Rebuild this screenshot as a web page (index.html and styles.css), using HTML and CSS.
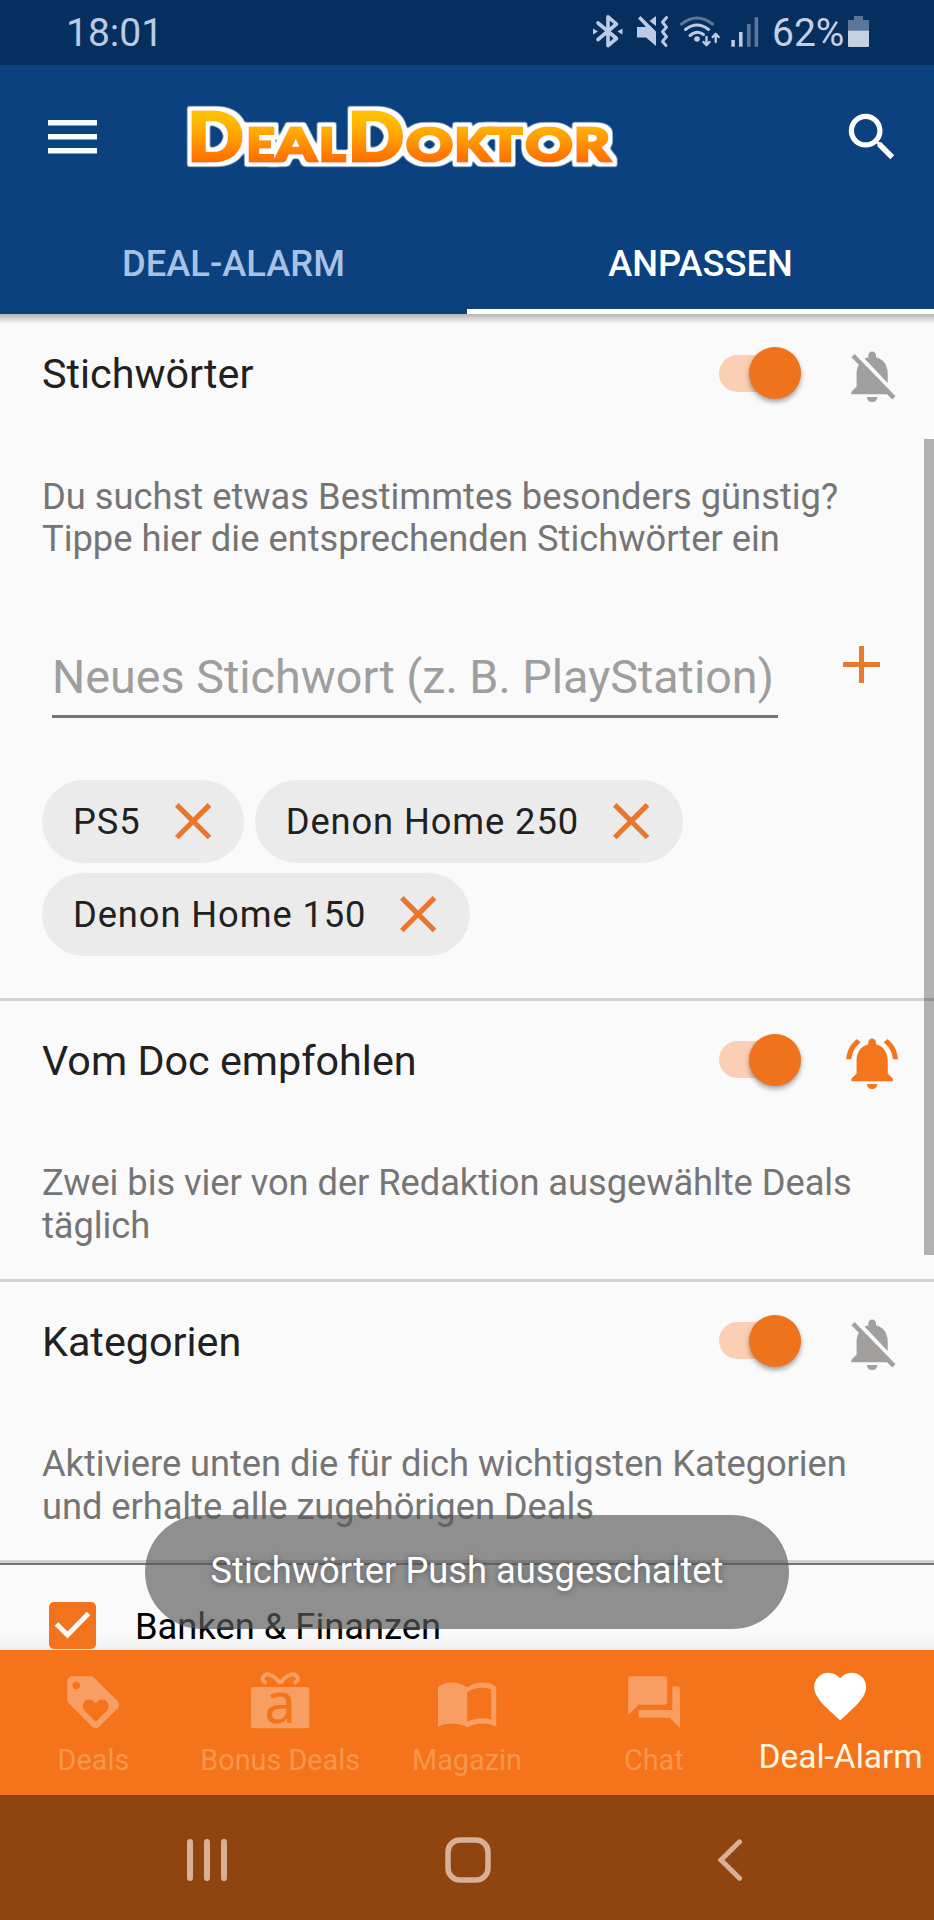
FILE: index.html
```html
<!DOCTYPE html>
<html lang="de">
<head>
<meta charset="utf-8">
<title>DealDoktor – Deal-Alarm anpassen</title>
<link rel="stylesheet" href="styles.css">
</head>
<body>
<svg width="0" height="0" class="defs">
  <symbol id="bell-off" viewBox="0 0 24 24"><path d="M20 18.69L7.84 6.14 5.27 3.49 4 4.76l2.8 2.8v.01c-.52.99-.8 2.16-.8 3.42v5l-2 2v1h13.73l2 2L21 19.72l-1-1.03zM12 22c1.11 0 2-.89 2-2h-4c0 1.11.89 2 2 2zm6-7.32V11c0-3.08-1.64-5.64-4.5-6.32V4c0-.83-.67-1.5-1.5-1.5s-1.5.67-1.5 1.5v.68c-.15.03-.29.08-.42.12-.1.03-.2.07-.3.11h-.01c-.01 0-.01 0-.02.01-.23.09-.46.2-.68.31 0 0-.01 0-.01.01L18 14.68z"/></symbol>
  <symbol id="bell-on" viewBox="0 0 24 24"><path d="M7.58 4.08L6.15 2.65C3.75 4.48 2.17 7.3 2.03 10.5h2c.15-2.65 1.51-4.97 3.55-6.42zm12.39 6.42h2c-.15-3.2-1.73-6.02-4.12-7.85l-1.42 1.43c2.02 1.45 3.39 3.77 3.54 6.42zM18 11c0-3.07-1.64-5.64-4.5-6.32V4c0-.83-.67-1.5-1.5-1.5s-1.5.67-1.5 1.5v.68C7.63 5.36 6 7.92 6 11v5l-2 2v1h16v-1l-2-2v-5zm-6 11c.14 0 .27-.01.4-.04.65-.14 1.18-.58 1.44-1.18.1-.24.15-.5.15-.78h-4c.01 1.1.9 2 2.01 2z"/></symbol>
  <symbol id="close" viewBox="0 0 24 24"><path d="M19 6.41L17.59 5 12 10.59 6.41 5 5 6.41 10.59 12 5 17.59 6.41 19 12 13.41 17.59 19 19 17.59 13.41 12z"/></symbol>
</svg>

<div class="screen">
  <div class="status-bar">
    <span class="clock">18:01</span>
    <svg class="status-icons" viewBox="592 10 170 42">
      <g fill="none" stroke="#bccbe3" stroke-width="3.6" stroke-linejoin="round" stroke-linecap="round">
        <path d="M598 23L616.5 38.5 608 45.5V16.8L616.5 24 598 39.5"/>
        <path d="M666.5 17.5l-4 4.7 4 4.9-4 4.7 4 4.9-4 4.7 3.5 4" stroke-width="3"/>
        <path d="M685.5 29.5Q697 20.5 708.5 29.5" stroke-width="3"/>
        <path d="M690 35.5Q697 29.5 703.5 34.5" stroke-width="3"/>
        <path d="M681.5 24Q697 12 712.5 24" stroke="#5c7699" stroke-width="3"/>
        <path d="M706.5 37v8m-3-3l3 3.2 3-3.2M715.7 42v-8m-3 3l3-3.2 3 3.2" stroke-width="2.4"/>
      </g>
      <g fill="#bccbe3">
        <path d="M593 28.5l5 3-5 3zM622.500 28.500l-5 3 5 3z"/>
        <path d="M637 27h9l-8-8.500 2.500-2.500L656 31.500V46l-10-8.500h-9zM656 16v10l-6.500-5z"/>
        <circle cx="697" cy="39" r="2.800"/>
        <rect x="731.300" y="40" width="3.600" height="6.700"/>
        <rect x="739" y="32" width="3.600" height="14.700"/>
      </g>
      <path d="M747 24h3.600v22.700H747zM754.600 17.300h3.600v29.400h-3.600z" fill="#5c7699"/>
    </svg>
    <span class="percent">62%</span>
    <svg class="battery" viewBox="0 0 22 32"><path d="M6 0h9v4h6v10.500H0V4h6z" fill="#5c7699"/><path d="M0 14.500h21V30a1 1 0 0 1-1 1H1a1 1 0 0 1-1-1z" fill="#c5d0e4"/></svg>
  </div>

  <header class="app-bar">
    <svg class="menu" viewBox="0 0 49 34"><path d="M0 0h49v5.500H0zM0 14h49v5.500H0zM0 28h49v5.500H0z" fill="#f4fdff"/></svg>
    <svg class="logo" viewBox="180 100 444 76" role="img">
      <defs>
        <linearGradient id="sun" gradientUnits="userSpaceOnUse" x1="0" y1="110" x2="0" y2="163"><stop offset="0" stop-color="#ffc400"/><stop offset=".35" stop-color="#ffb000"/><stop offset="1" stop-color="#ff6a00"/></linearGradient>
        <filter id="rim" x="-5%" y="-20%" width="110%" height="140%">
          <feMorphology in="SourceAlpha" operator="dilate" radius="4"/>
          <feGaussianBlur stdDeviation="1"/>
          <feComponentTransfer result="edge"><feFuncR type="linear" slope="0" intercept="1"/><feFuncG type="linear" slope="0" intercept="1"/><feFuncB type="linear" slope="0" intercept="1"/><feFuncA type="linear" slope="1.800" intercept="-.3"/></feComponentTransfer>
          <feMerge><feMergeNode in="edge"/><feMergeNode in="SourceGraphic"/></feMerge>
        </filter>
      </defs>
      <text class="logo-text" y="160.500" filter="url(#rim)"><tspan class="big" x="187.500" textLength="56" lengthAdjust="spacingAndGlyphs">D</tspan><tspan x="246.500" textLength="28" lengthAdjust="spacingAndGlyphs">E</tspan><tspan x="275.500" textLength="40.500" lengthAdjust="spacingAndGlyphs">A</tspan><tspan x="319" textLength="26.500" lengthAdjust="spacingAndGlyphs">L</tspan><tspan class="big" x="348" textLength="56" lengthAdjust="spacingAndGlyphs">D</tspan><tspan x="406" textLength="47" lengthAdjust="spacingAndGlyphs">O</tspan><tspan x="454.500" textLength="36.500" lengthAdjust="spacingAndGlyphs">K</tspan><tspan x="488.500" textLength="33.500" lengthAdjust="spacingAndGlyphs">T</tspan><tspan x="525.500" textLength="47" lengthAdjust="spacingAndGlyphs">O</tspan><tspan x="574" textLength="36" lengthAdjust="spacingAndGlyphs">R</tspan></text>
    </svg>
    <svg class="search" viewBox="0 0 24 24"><path d="M15.500 14h-.79l-.28-.27C15.410 12.590 16 11.110 16 9.500 16 5.910 13.090 3 9.500 3S3 5.910 3 9.500 5.910 16 9.500 16c1.610 0 3.090-.59 4.230-1.570l.27.28v.79l5 4.990L20.490 19l-4.990-5zm-6 0C7.010 14 5 11.990 5 9.500S7.010 5 9.500 5 14 7.010 14 9.500 11.990 14 9.500 14z" fill="#fff"/></svg>
  </header>

  <nav class="tabs">
    <div class="tab">DEAL-ALARM</div>
    <div class="tab selected">ANPASSEN</div>
  </nav>

  <main class="content">
    <section class="section">
      <div class="section-head">
        <h2>Stichwörter</h2>
        <div class="switch"><div class="thumb"></div></div>
        <svg class="bell muted"><use href="#bell-off"/></svg>
      </div>
      <p class="desc">Du suchst etwas Bestimmtes besonders günstig?<br>Tippe hier die entsprechenden Stichwörter ein</p>
      <div class="entry">
        <div class="field"><span>Neues Stichwort (z. B. PlayStation)</span></div>
        <svg class="plus" viewBox="0 0 37 37"><path d="M16 0h5v16h16v5H21v16h-5V21H0v-5h16z" fill="#e57a30"/></svg>
      </div>
      <div class="chips">
        <div class="chip"><span>PS5</span><svg><use href="#close"/></svg></div>
        <div class="chip"><span>Denon Home 250</span><svg><use href="#close"/></svg></div>
        <div class="chip"><span>Denon Home 150</span><svg><use href="#close"/></svg></div>
      </div>
    </section>

    <section class="section">
      <div class="section-head">
        <h2>Vom Doc empfohlen</h2>
        <div class="switch"><div class="thumb"></div></div>
        <svg class="bell"><use href="#bell-on"/></svg>
      </div>
      <p class="desc tight">Zwei bis vier von der Redaktion ausgewählte Deals<br>täglich</p>
    </section>

    <section class="section">
      <div class="section-head">
        <h2>Kategorien</h2>
        <div class="switch"><div class="thumb"></div></div>
        <svg class="bell muted"><use href="#bell-off"/></svg>
      </div>
      <p class="desc tight">Aktiviere unten die für dich wichtigsten Kategorien<br>und erhalte alle zugehörigen Deals</p>
    </section>

    <div class="category">
      <svg class="checkbox" viewBox="0 0 47 47"><rect width="47" height="47" rx="5" fill="#f2731d"/><path d="M7.500 22L18.500 33 39.500 11.500" fill="none" stroke="#fff8ee" stroke-width="5"/></svg>
      <span>Banken &amp; Finanzen</span>
    </div>
    <div class="scrollbar"></div>
    <div class="toast">Stichwörter Push ausgeschaltet</div>
  </main>

  <nav class="bottom-nav">
    <div class="item">
      <svg class="icon" viewBox="0 0 24 24"><path d="M21.410 11.580l-9-9C12.050 2.220 11.550 2 11 2H4c-1.100 0-2 .9-2 2v7c0 .55.22 1.050.59 1.420l9 9c.36.36.86.58 1.410.58s1.050-.22 1.410-.59l7-7c.37-.36.59-.86.59-1.410s-.23-1.060-.59-1.420zM5.500 7C4.670 7 4 6.330 4 5.500S4.670 4 5.500 4 7 4.670 7 5.500 6.330 7 5.500 7zm11.770 8.270L13 19.540l-4.270-4.270C8.280 14.810 8 14.190 8 13.500c0-1.380 1.120-2.500 2.500-2.500.69 0 1.320.28 1.770.74l.73.72.73-.73c.45-.45 1.080-.73 1.770-.73 1.380 0 2.500 1.120 2.500 2.500 0 .69-.28 1.320-.73 1.770z"/></svg>
      <span>Deals</span>
    </div>
    <div class="item">
      <svg class="icon" viewBox="0 0 62 62">
        <rect x="2" y="16" width="58" height="41" rx="2"/>
        <path d="M31 12C27 6 19 1 15 4.500 12 8 14 11 17.500 12M31 12C35 6 43 1 47 4.500 50 8 48 11 44.500 12" fill="none" stroke="#f89e62" stroke-width="4"/>
        <text class="gift-letter" x="31" y="51.500" text-anchor="middle">a</text>
      </svg>
      <span>Bonus Deals</span>
    </div>
    <div class="item">
      <svg class="icon" viewBox="0 0 62 62"><path fill-rule="evenodd" d="M2 16C10 10 22 10 31 16.500 40 10 52 10 60 16V55.500C52 51 40 51 31 56 22 51 10 51 2 55.500zM31 21V50.500C38 47 48 46 55 48.500V18.500C47 15.500 38 16.500 31 21z"/></svg>
      <span>Magazin</span>
    </div>
    <div class="item">
      <svg class="icon" viewBox="0 0 24 24"><path d="M21 6h-2v9H6v2c0 .55.45 1 1 1h11l4 4V7c0-.55-.45-1-1-1zm-4 6V3c0-.55-.45-1-1-1H3c-.55 0-1 .45-1 1v14l4-4h10c.55 0 1-.45 1-1z"/></svg>
      <span>Chat</span>
    </div>
    <div class="item active">
      <svg class="icon" viewBox="0 0 24 24"><path d="M12 21.350l-1.450-1.320C5.400 15.360 2 12.280 2 8.500 2 5.420 4.420 3 7.500 3c1.740 0 3.410.81 4.500 2.090C13.090 3.810 14.760 3 16.500 3 19.580 3 22 5.420 22 8.500c0 3.780-3.400 6.860-8.550 11.540L12 21.350z"/></svg>
      <span>Deal-Alarm</span>
    </div>
  </nav>

  <div class="system-nav">
    <svg viewBox="0 0 40 42"><path d="M3 3v36M20 3v36M37 3v36" stroke-width="6"/></svg>
    <svg class="home" viewBox="0 0 46 46"><rect x="3" y="3" width="40" height="40" rx="12" stroke-width="5.500"/></svg>
    <svg class="back" viewBox="0 0 26 42"><path d="M22.500 2.800L4 21l18.500 18.200" stroke-width="5"/></svg>
  </div>
</div>
</body>
</html>
```
FILE: styles.css
```css
* { box-sizing: border-box; }

body {
  margin: 0;
  font-family: Roboto, "Noto Sans", sans-serif;
  background: #fafafa;
}

svg { display: block; flex: none; }
.defs { position: absolute; }

.screen {
  display: flex;
  flex-direction: column;
  width: 934px;
  height: 1920px;
  overflow: hidden;
}

/* Status bar */
.status-bar {
  display: flex;
  align-items: center;
  height: 65px;
  padding: 0 64px 0 66px;
  background: #052f5f;
  color: #bccbe3;
  font-size: 39px;
  line-height: 65px;
}
.clock { flex: 1; padding-top: 2px; }
.status-icons { width: 170px; height: 42px; margin-top: -3px; }
.percent { width: 86px; padding: 2px 0 0 10px; color: #c5d0e4; white-space: nowrap; }
.battery { width: 22px; height: 32px; margin-top: -2px; }

/* App bar */
.app-bar {
  display: flex;
  align-items: center;
  height: 145px;
  padding: 0 31px 0 48px;
  background: #0c417f;
}
.menu { width: 49px; height: 34px; margin-top: -1px; }
.logo { width: 444px; height: 76px; margin: 0 auto 0 83px; overflow: visible; }
.logo-text {
  font-family: Lato, sans-serif;
  font-weight: 900;
  font-size: 46px;
  fill: url(#sun);
  stroke: url(#sun);
  stroke-width: 3px;
}
.logo-text .big { font-size: 67px; }
.search { width: 62.300px; height: 62.300px; }

/* Tabs */
.tabs { display: flex; height: 104px; background: #0c417f; flex: none; }
.tab {
  flex: 1;
  text-align: center;
  font-size: 36.300px;
  font-weight: 500;
  line-height: 108px;
  color: #a9c1e3;
}
.tab.selected { color: #fff; border-bottom: 5px solid #fff; }

/* Scrolling content */
.content {
  position: relative;
  height: 1336px;
  overflow: hidden;
  background:
    linear-gradient(rgba(0, 0, 0, .28), rgba(0, 0, 0, 0)) top / 100% 10px no-repeat,
    linear-gradient(rgba(0, 0, 0, 0), rgba(0, 0, 0, .05)) bottom / 100% 14px no-repeat;
}
.section { border-bottom: 3px solid #d2d2d2; padding-bottom: 31.500px; }
.section:first-child { padding-bottom: 42px; }
.section-head {
  display: flex;
  align-items: center;
  height: 118px;
  padding: 0 31px 0 42px;
}
h2 {
  flex: 1;
  margin: 2px 0 0;
  font-size: 41.300px;
  font-weight: 400;
  color: #212121;
}
.switch {
  display: flex;
  align-items: center;
  justify-content: flex-end;
  width: 82px;
  height: 37px;
  margin-right: 40px;
  border-radius: 19px;
  background: #facfb3;
}
.thumb {
  flex: none;
  width: 52px;
  height: 52px;
  border-radius: 50%;
  background: #ef721c;
  box-shadow: 0 3px 5px rgba(0, 0, 0, .35);
}
.bell { width: 62.300px; height: 62.300px; margin-top: 7px; fill: #f4751e; }
.bell.muted { fill: #a1a09f; }
.desc {
  margin: 0;
  padding: 43.500px 0 0 42px;
  font-size: 36.300px;
  line-height: 42.500px;
  color: #757575;
  white-space: nowrap;
}
.desc.tight { letter-spacing: -.06px; }

.entry { display: flex; gap: 65px; margin-top: 79px; padding-left: 52px; }
.field {
  width: 726px;
  height: 78px;
  border-bottom: 3px solid #757575;
  font-size: 46.700px;
  line-height: 75px;
  color: #9e9e9e;
  white-space: nowrap;
}
.plus { width: 37px; height: 37px; margin-top: 6px; }

.chips { display: flex; flex-wrap: wrap; gap: 10.300px; margin-top: 62px; padding: 0 150px 0 42px; }
.chip {
  display: flex;
  align-items: center;
  height: 83px;
  padding: 0 20.500px 0 31px;
  border-radius: 42px;
  background: #ebebeb;
  color: #212121;
  font-size: 36.300px;
  letter-spacing: .9px;
}
.chip svg { width: 62.300px; height: 62.300px; margin-left: 21px; fill: #e9762a; }

.category {
  display: flex;
  align-items: center;
  gap: 39px;
  height: 123px;
  padding: 0 0 0 49px;
  border-top: 2px solid #757575;
  font-size: 36.300px;
  color: #000;
}
.category span { padding-top: 3px; }
.checkbox { width: 47px; height: 47px; }

.scrollbar {
  position: absolute;
  right: 0;
  top: 125px;
  width: 10px;
  height: 816px;
  background: rgba(0, 0, 0, .29);
}
.toast {
  position: absolute;
  left: 145px;
  top: 1201px;
  width: 644px;
  height: 114px;
  border-radius: 57px;
  background: rgba(90, 90, 90, .67);
  color: #fff;
  font-size: 36.300px;
  line-height: 111px;
  text-align: center;
  text-shadow: 0 1px 6px rgba(0, 0, 0, .4);
}

/* Bottom navigation */
.bottom-nav { display: flex; flex: none; height: 145px; background: #f5731b; }
.item {
  display: flex;
  flex-direction: column;
  align-items: center;
  width: 20%;
  padding-top: 21px;
  font-size: 28.800px;
  line-height: 36px;
  color: #f8964e;
  white-space: nowrap;
}
.icon { width: 62.300px; height: 62.300px; fill: #f89e62; }
.item span { margin-top: 9px; }
.gift-letter { font: 400 56px "Noto Sans", sans-serif; fill: #f5731b; }
.active { padding-top: 15px; color: #fff6e2; font-size: 33.500px; }
.active .icon { fill: #fff; }
.active span { margin-top: 12px; }

/* System navigation */
.system-nav {
  display: flex;
  align-items: center;
  height: 125px;
  padding-left: 187px;
  background: #904511;
  fill: none;
  stroke: #d8b096;
  stroke-linecap: round;
}
.system-nav svg { width: 40px; height: 42px; margin-top: 4px; }
.system-nav .home { width: 46px; height: 46px; margin-left: 218px; }
.system-nav .back { width: 26px; margin-left: 226px; }
```
